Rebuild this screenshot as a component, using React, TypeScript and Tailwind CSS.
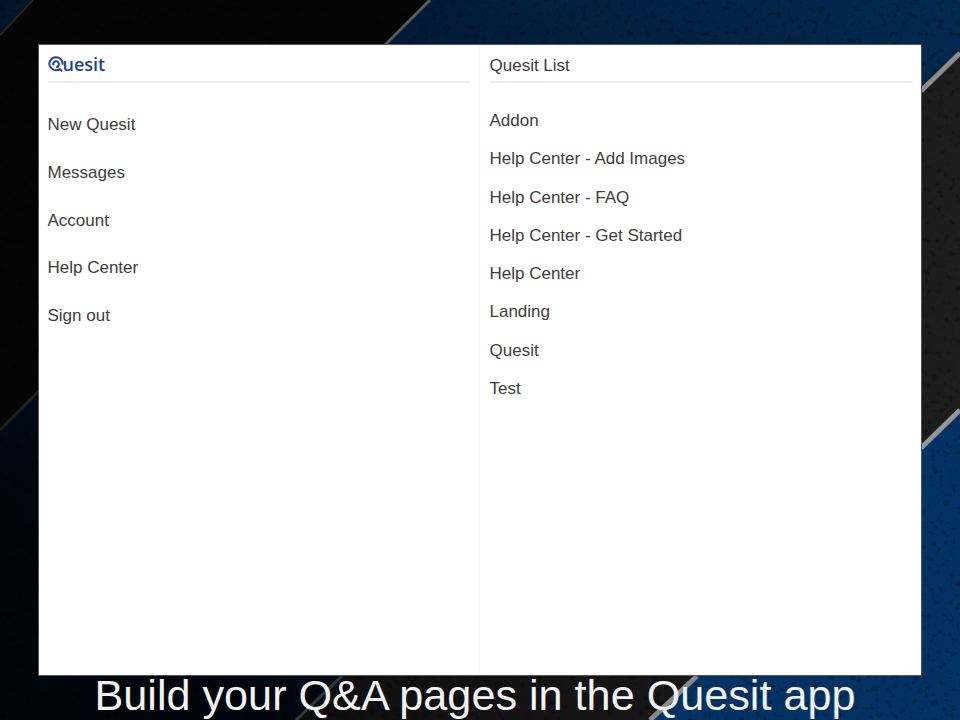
import React from 'react';

const MENU = ['New Quesit', 'Messages', 'Account', 'Help Center', 'Sign out'];

const QUESITS = [
  'Addon',
  'Help Center - Add Images',
  'Help Center - FAQ',
  'Help Center - Get Started',
  'Help Center',
  'Landing',
  'Quesit',
  'Test',
];

// diagonal slate backdrop behind the card
function Backdrop() {
  return (
    <svg className="absolute inset-0 h-full w-full" viewBox="0 0 960 720" aria-hidden="true">
      <defs>
        <linearGradient id="navy" x1="0" y1="1" x2="1" y2="0">
          <stop offset="0.15" stopColor="#01060d" />
          <stop offset="0.42" stopColor="#011225" />
          <stop offset="0.7" stopColor="#021b37" />
          <stop offset="1" stopColor="#032a52" />
        </linearGradient>
        <linearGradient id="slate" x1="0" y1="0" x2="1" y2="0">
          <stop offset="0" stopColor="#0e0e0e" />
          <stop offset="1" stopColor="#1d1d1d" />
        </linearGradient>
        <linearGradient id="edge" x1="0" y1="1" x2="1" y2="0">
          <stop offset="0" stopColor="#1c1c1c" />
          <stop offset="1" stopColor="#5c5c5c" />
        </linearGradient>
        <filter id="grain" x="0" y="0" width="100%" height="100%">
          <feTurbulence type="fractalNoise" baseFrequency="0.16" numOctaves="3" seed="11" />
          <feColorMatrix values="0 0 0 0 0  0 0 0 0 0  0 0 0 0 0  0 0 0 -5 2.1" />
        </filter>
      </defs>
      <rect width="960" height="720" fill="url(#navy)" />
      <polygon points="33,0 430,0 0,430 0,35" fill="#050505" />
      <polygon points="960,54 960,410 650,720 296,720" fill="url(#slate)" />
      <polygon points="960,410 960,720 650,720" fill="#033263" />
      <rect width="960" height="720" filter="url(#grain)" opacity="0.25" />
      <line x1="33" y1="0" x2="0" y2="35" stroke="#23262a" strokeWidth="2" />
      <line x1="430" y1="0" x2="0" y2="430" stroke="url(#edge)" strokeWidth="3" />
      <line x1="960" y1="53" x2="921" y2="91" stroke="#8c8c8c" strokeWidth="5" />
      <line x1="342" y1="676" x2="296" y2="720" stroke="#34373b" strokeWidth="3" />
      <line x1="960" y1="410" x2="921" y2="448" stroke="#959595" strokeWidth="5" />
      <line x1="697" y1="676" x2="650" y2="720" stroke="#8a8a8a" strokeWidth="5" />
    </svg>
  );
}

function Logo() {
  return (
    <div className="flex items-center text-[18px] leading-[20px] font-semibold text-[#24409c] font-['Open_Sans',sans-serif]">
      <svg width="16" height="16" viewBox="0 0 16 16" fill="none" aria-hidden="true" className="shrink-0">
        <path
          d="M13.6 14.8 L12 13 A6.6 6.6 0 1 1 14.6 8 M5.2 8.6 A2.9 2.9 0 1 1 8.2 11 L10 11"
          stroke="#24409c"
          strokeWidth="2"
          strokeLinecap="round"
        />
      </svg>
      <span className="-ml-px">uesit</span>
    </div>
  );
}

export default function App() {
  return (
    <div className="relative h-[720px] w-[960px] overflow-hidden bg-[#021730] font-['Liberation_Sans',Arial,sans-serif]">
      <Backdrop />

      <div className="relative flex h-full flex-col pl-[38px] pt-[44px]">
        <div className="grid h-[632px] w-[884px] shrink-0 grid-cols-[441px_1fr] border border-[#555555] bg-white text-[17px] text-[#3d3d3d]">
          {/* menu column */}
          <div className="border-r border-[#f6f6f6] pl-[8.5px] pr-[9px]">
            <div className="flex h-[38px] items-center border-b-2 border-[#eeeeee] pt-[1px]">
              <Logo />
            </div>
            <ul className="flex flex-col gap-[25.75px] pt-[31px]">
              {MENU.map((item) => (
                <li key={item} className="h-[22px] leading-[22px]">
                  {item}
                </li>
              ))}
            </ul>
          </div>

          {/* quesit list column */}
          <div className="pl-[9.5px] pr-[8px]">
            <div className="flex h-[38px] items-center border-b-2 border-[#eeeeee] pt-[5px] leading-[22px]">Quesit List</div>
            <ul className="flex flex-col gap-[16.3px] pt-[27px]">
              {QUESITS.map((item, i) => (
                <li key={i} className="h-[22px] leading-[22px]">
                  {item}
                </li>
              ))}
            </ul>
          </div>
        </div>

        <div className="-ml-[38px] -mt-[3px] w-[950px] text-center text-[43.2px] leading-[44px] whitespace-nowrap text-[#f2f2f2]">
          Build your Q&amp;A pages in the Quesit app
        </div>
      </div>
    </div>
  );
}
